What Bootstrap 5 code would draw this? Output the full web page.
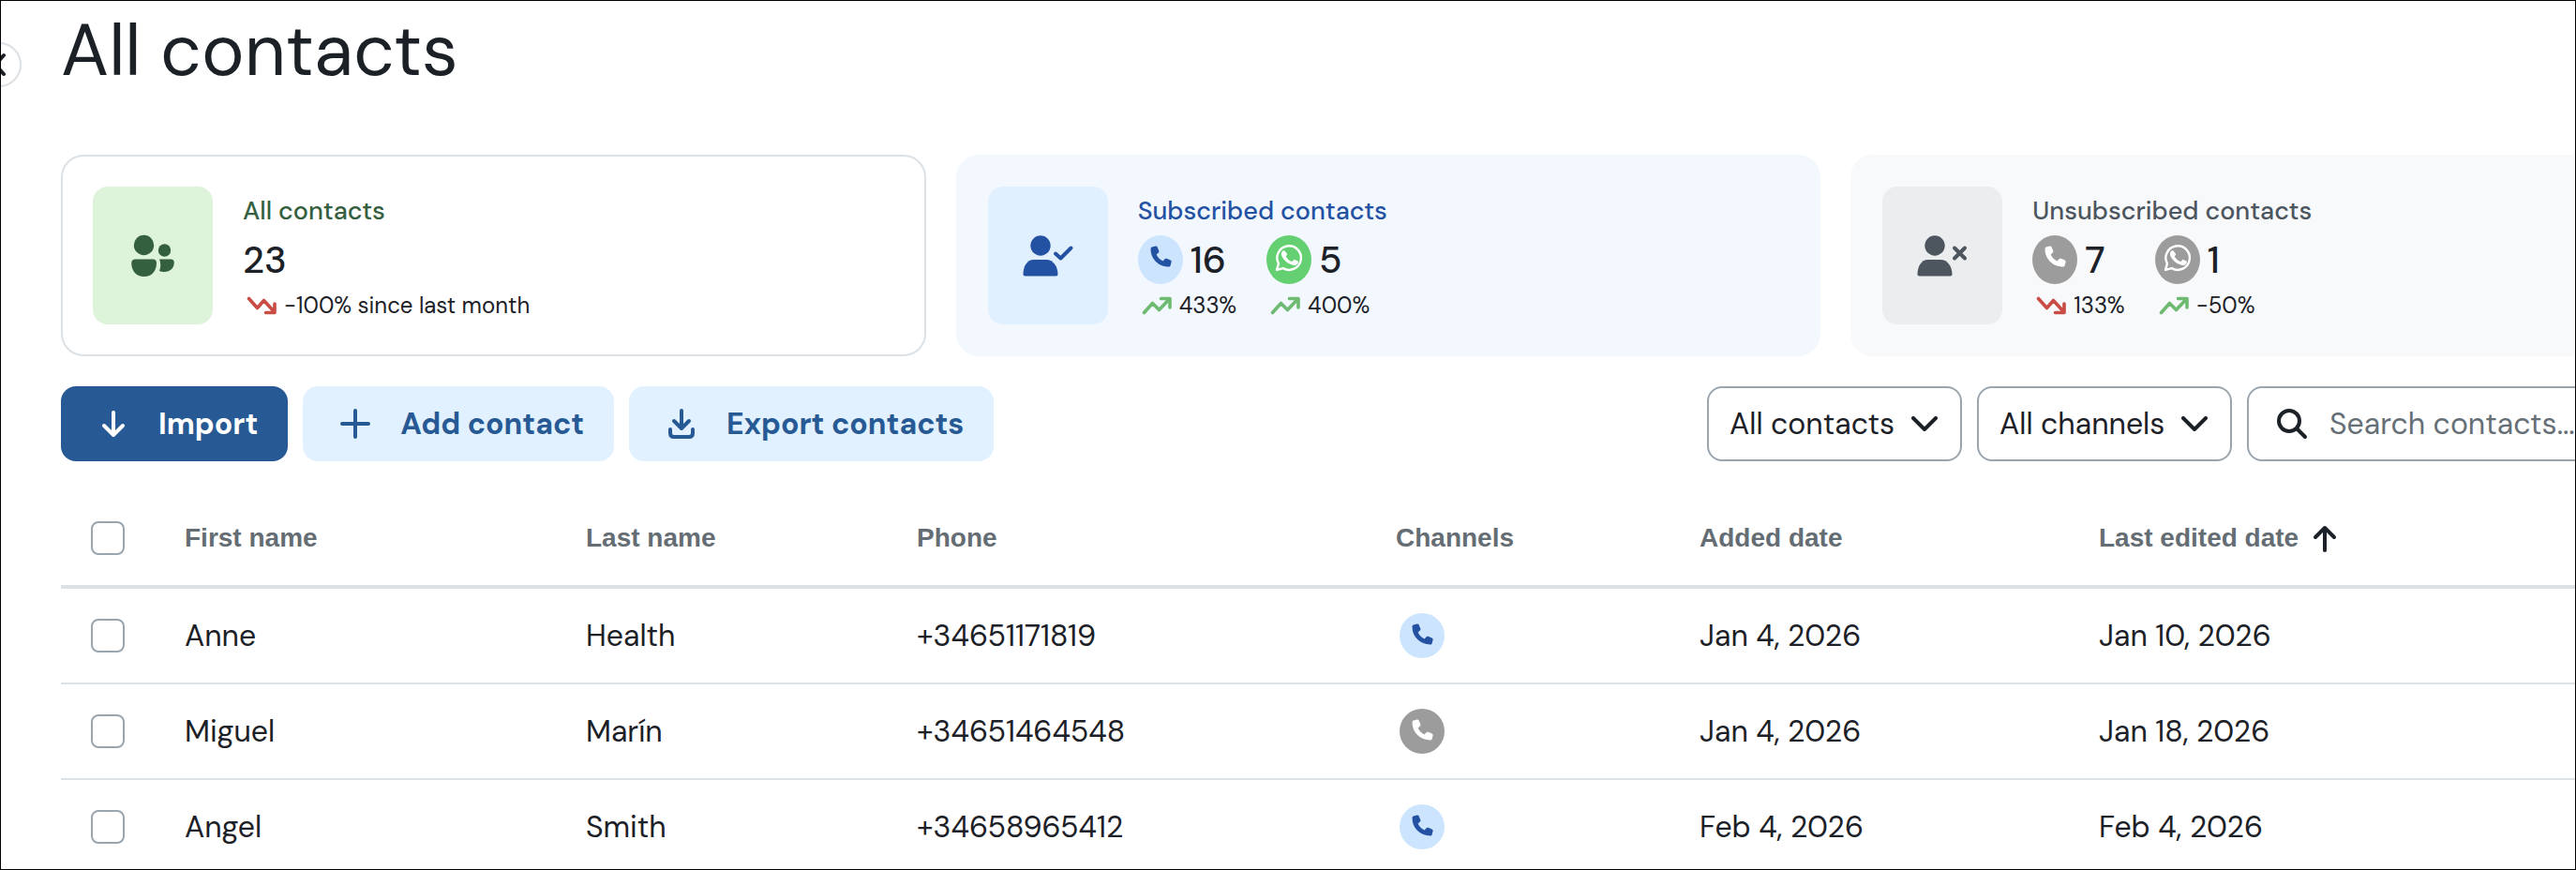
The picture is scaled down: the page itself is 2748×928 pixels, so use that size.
<!DOCTYPE html>
<html lang="en">
<head>
<meta charset="utf-8">
<meta name="viewport" content="width=device-width, initial-scale=1">
<title>All contacts</title>
<link href="https://cdn.jsdelivr.net/npm/bootstrap@5.3.0/dist/css/bootstrap.min.css" rel="stylesheet">
<style>
:root{--ink:#1c2127;--line:#dce1e5;--edge:#9ba5ae;--blue:#275a94;--navy:#2452a3}
body{font-family:"DM Sans",Inter,sans-serif;color:var(--ink);background:#fff;font-size:32px;line-height:40px;min-height:100vh;overflow:hidden}
.frame{border:1px solid #000;height:100vh;overflow:hidden;position:relative}
/* the workspace is wider than the visible pane */
.workspace{padding:3px 0 0 64px;margin-right:-150px}
.collapse-btn{position:absolute;left:-26px;top:44px;width:48px;height:48px;border:2px solid var(--line);border-radius:50%;background:#fff;padding:0}
.collapse-btn svg{display:block;margin:auto}
h1{font-size:77px;line-height:100px;font-weight:400;margin:0 0 61px}
.gap-wide{gap:32px}
.gap-sort{gap:12px}
.toolbar{margin-top:32px}
.stat{flex:1 1 0;border:2px solid transparent;border-radius:24px;padding:32px;gap:32px}
.stat-all{border-color:var(--line)}
.stat-sub{background:#f3f8ff}
.stat-unsub{background:#f8f9fb}
.tile{width:128px;height:147px;border-radius:16px}
.stat-all .tile{background:#ddf3da;color:#35603f}
.stat-sub .tile{background:#e1f0fe;color:var(--navy)}
.stat-unsub .tile{background:#ebedee;color:#4d565e}
.stat-title{font-size:27px;line-height:36px;font-weight:500;margin:8px 0}
.stat-all .stat-title{color:#35603f}
.stat-sub .stat-title{color:var(--navy)}
.stat-unsub .stat-title{color:#4d565e}
.figure-line{font-size:40px;line-height:52px;height:52px;font-weight:500;gap:8px}
.trend{font-size:24px;line-height:32px;margin-top:7px;gap:8px;padding-left:4px}
.dot{width:48px;height:48px;border-radius:50%;display:inline-flex;align-items:center;justify-content:center}
.figure-line .dot{height:52px;padding-bottom:4px}
.dot-blue{background:#cce4fd;color:var(--navy)}
.dot-green{background:#65d072;color:#fff}
.dot-gray{background:#9c9c9c;color:#fff}
.act{height:80px;border:0;border-radius:16px;font-size:32px;font-weight:700;padding:0 32px 0 40px;gap:32px;white-space:nowrap}
.act-main,.act-main:hover{background:var(--blue);color:#fff}
.act-soft,.act-soft:hover{background:#e1f1ff;color:var(--blue)}
.pick{height:80px;width:272px;border:2px solid var(--edge);border-radius:16px;font-size:32px;line-height:40px;color:var(--ink);padding:0 60px 0 22px;background-position:right 24px center;background-size:28px 16px;background-image:url("data:image/svg+xml,%3Csvg xmlns='http://www.w3.org/2000/svg' viewBox='0 0 28 16'%3E%3Cpath d='M2 2l12 12L26 2' fill='none' stroke='%231c2127' stroke-width='4' stroke-linecap='round' stroke-linejoin='round'/%3E%3C/svg%3E")}
.finder{height:80px;width:500px;border:2px solid var(--edge);border-radius:16px;padding-left:29px;gap:23px}
.finder input{border:0;padding:0;font-size:32px;line-height:40px;color:var(--ink);box-shadow:none!important}
.finder input::placeholder{color:#666f76;opacity:1}
.people{table-layout:fixed;width:100%;margin:32px 0 0;border-collapse:separate;border-spacing:0}
.people th,.people td{padding:0;vertical-align:middle;text-align:left}
.people thead th{height:104px;border-bottom:4px solid var(--line);font:700 28px/36px "Liberation Sans",Arial,sans-serif;color:#656d74}
.people tbody td{height:102px;border-bottom:2px solid var(--line)}
.people .dot{display:flex}
.people .form-check-input{display:block;width:36px;height:36px;margin:0 0 0 32px;border:2px solid var(--edge);border-radius:8px}
</style>
</head>
<body>
<div class="frame">
<svg class="d-none" xmlns="http://www.w3.org/2000/svg">
  <symbol id="i-phone" viewBox="0 0 24 24"><path fill="currentColor" d="M3.600 1.400 7 .5c.8-.2 1.600.2 1.900.9l1.500 3.700c.3.700.1 1.400-.4 1.900L8 8.700c1.300 2.900 3.600 5.200 6.500 6.500l1.700-2c.5-.6 1.200-.7 1.900-.4l3.700 1.500c.7.3 1.100 1.100.9 1.900l-.9 3.400c-.2.700-.8 1.200-1.600 1.200C9.800 20.800 1.800 12.500 2.400 3c0-.8.5-1.400 1.200-1.600z"/></symbol>
  <symbol id="i-wa" viewBox="0 0 32 32"><path fill="none" stroke="currentColor" stroke-width="2.600" stroke-linejoin="round" d="M2.200 29.800l2-7.200A13.600 13.600 0 1 1 9.400 27.900z"/><path fill="currentColor" d="M11.300 8.300c-.3-.7-.6-.7-1-.7-1.400 0-3 1.500-3 3.900 0 2.300 1.700 4.500 1.900 4.800.3.300 3.300 5.200 8.100 7 4 1.600 4.800 1.300 5.700 1.200.9-.1 2.800-1.100 3.200-2.300.4-1.100.4-2.100.3-2.300-.1-.2-.5-.3-.9-.5l-3-1.400c-.5-.2-.8-.3-1.100.2l-1.500 1.800c-.3.300-.5.400-1 .1-.5-.2-2-.7-3.700-2.300-1.400-1.200-2.300-2.700-2.600-3.200-.2-.5 0-.7.3-.9.800-.9 1.200-1.500 1.100-2z"/></symbol>
  <symbol id="i-up" viewBox="0 0 32 20"><path fill="none" stroke="currentColor" stroke-width="3.600" stroke-linecap="round" stroke-linejoin="round" d="M2.500 17.500l9-10 7 7L29 3.500M20.500 2.500H30V12"/></symbol>
  <symbol id="i-down" viewBox="0 0 32 20"><path fill="none" stroke="currentColor" stroke-width="3.600" stroke-linecap="round" stroke-linejoin="round" d="M2.500 2.500l9 10 7-8L29 16M20.500 17.500H30V8"/></symbol>
</svg>

<button class="collapse-btn" type="button" aria-label="Collapse sidebar"><svg width="16" height="26" viewBox="0 0 16 26"><path d="M13 3L4 13l9 10" fill="none" stroke="#1c2127" stroke-width="4" stroke-linecap="round" stroke-linejoin="round"/></svg></button>

<main class="workspace">
  <h1>All contacts</h1>

  <section class="d-flex gap-wide">
    <article class="stat stat-all d-flex">
      <div class="tile d-flex align-items-center justify-content-center flex-shrink-0">
        <svg width="48" height="48" viewBox="0 0 48 48" fill="currentColor"><circle cx="14.500" cy="12.500" r="10.700"/><circle cx="36.500" cy="18" r="6.700"/><path d="M5.500 27.500h18.500c2.600 0 4 1.600 4 4C28 40 23 46 14.700 46S1.200 40 1.200 31.500c0-2.400 1.700-4 4.300-4zM31 27.500h12.500c2 0 3.300 1.300 3.300 3.200 0 6-4.300 10.300-10.300 10.300-2 0-4-.2-5.500-1 1.700-4 1.600-8.500 0-12.500z"/></svg>
      </div>
      <div>
        <h2 class="stat-title">All contacts</h2>
        <div class="figure-line d-flex align-items-center">23</div>
        <div class="trend d-flex align-items-center"><svg width="32" height="20" color="#c94c45"><use href="#i-down"/></svg>-100% since last month</div>
      </div>
    </article>
    <article class="stat stat-sub d-flex">
      <div class="tile d-flex align-items-center justify-content-center flex-shrink-0">
        <svg width="56" height="46" viewBox="0 0 56 46" fill="currentColor"><circle cx="20" cy="12" r="10.700"/><path d="M13 27h13c8 0 12.500 8 12.500 15.500 0 1.300-.8 2-2 2h-33c-1.200 0-2-.7-2-2C1.500 35 5 27 13 27z"/><path d="M36 20.500l5.500 5L52.500 14.500" fill="none" stroke="currentColor" stroke-width="4" stroke-linecap="round" stroke-linejoin="round"/></svg>
      </div>
      <div>
        <h2 class="stat-title">Subscribed contacts</h2>
        <div class="d-flex gap-wide">
          <div>
            <div class="figure-line d-flex align-items-center"><span class="dot dot-blue"><svg width="26" height="26"><use href="#i-phone"/></svg></span>16</div>
            <div class="trend d-flex align-items-center"><svg width="32" height="20" color="#6dba70"><use href="#i-up"/></svg>433%</div>
          </div>
          <div>
            <div class="figure-line d-flex align-items-center"><span class="dot dot-green"><svg width="30" height="30"><use href="#i-wa"/></svg></span>5</div>
            <div class="trend d-flex align-items-center"><svg width="32" height="20" color="#6dba70"><use href="#i-up"/></svg>400%</div>
          </div>
        </div>
      </div>
    </article>
    <article class="stat stat-unsub d-flex">
      <div class="tile d-flex align-items-center justify-content-center flex-shrink-0">
        <svg width="56" height="46" viewBox="0 0 56 46" fill="currentColor"><circle cx="20" cy="12" r="10.700"/><path d="M13 27h13c8 0 12.500 8 12.500 15.500 0 1.300-.8 2-2 2h-33c-1.200 0-2-.7-2-2C1.500 35 5 27 13 27z"/><path d="M41 14.500l11 11M52 14.500l-11 11" fill="none" stroke="currentColor" stroke-width="4" stroke-linecap="round"/></svg>
      </div>
      <div>
        <h2 class="stat-title">Unsubscribed contacts</h2>
        <div class="d-flex gap-wide">
          <div>
            <div class="figure-line d-flex align-items-center"><span class="dot dot-gray"><svg width="26" height="26"><use href="#i-phone"/></svg></span>7</div>
            <div class="trend d-flex align-items-center"><svg width="32" height="20" color="#c94c45"><use href="#i-down"/></svg>133%</div>
          </div>
          <div>
            <div class="figure-line d-flex align-items-center"><span class="dot dot-gray"><svg width="30" height="30"><use href="#i-wa"/></svg></span>1</div>
            <div class="trend d-flex align-items-center"><svg width="32" height="20" color="#6dba70"><use href="#i-up"/></svg>-50%</div>
          </div>
        </div>
      </div>
    </article>
  </section>

  <section class="toolbar d-flex gap-3">
    <button type="button" class="act act-main btn d-flex align-items-center"><svg width="32" height="32" viewBox="0 0 32 32" fill="none" stroke="currentColor" stroke-width="4" stroke-linecap="round" stroke-linejoin="round"><path d="M16 4v24M6 18l10 10 10-10"/></svg>Import</button>
    <button type="button" class="act act-soft btn d-flex align-items-center"><svg width="32" height="32" viewBox="0 0 32 32" fill="none" stroke="currentColor" stroke-width="4" stroke-linecap="round"><path d="M16 2v28M2 16h28"/></svg>Add contact</button>
    <button type="button" class="act act-soft btn d-flex align-items-center"><svg width="32" height="32" viewBox="0 0 32 32" fill="none" stroke="currentColor" stroke-width="4" stroke-linecap="round" stroke-linejoin="round"><path d="M16 2v18M8 13l8 8 8-8M4 22v4q0 4 4 4h16q4 0 4-4v-4"/></svg>Export contacts</button>
    <select class="pick form-select ms-auto" aria-label="Contact filter"><option>All contacts</option></select>
    <select class="pick form-select" aria-label="Channel filter"><option>All channels</option></select>
    <label class="finder d-flex align-items-center"><svg class="flex-shrink-0" width="34" height="34" viewBox="0 0 34 34" fill="none" stroke="#1c2127" stroke-width="4" stroke-linecap="round"><circle cx="14" cy="14" r="11"/><path d="M22.500 22.500L31 31"/></svg><input class="form-control" type="text" placeholder="Search contacts..." aria-label="Search contacts"></label>
  </section>

  <table class="people">
    <colgroup><col style="width:132px"><col style="width:428px"><col style="width:353px"><col style="width:511px"><col style="width:324px"><col style="width:426px"><col></colgroup>
    <thead><tr><th scope="col"><input class="form-check-input" type="checkbox" aria-label="Select all"></th><th scope="col">First name</th><th scope="col">Last name</th><th scope="col">Phone</th><th scope="col">Channels</th><th scope="col">Added date</th><th scope="col"><span class="gap-sort d-flex align-items-center">Last edited date<svg width="32" height="32" viewBox="0 0 32 32" fill="none" stroke="#1c2127" stroke-width="4" stroke-linecap="round" stroke-linejoin="round"><path d="M16 29V5M6 15L16 5l10 10"/></svg></span></th></tr></thead>
    <tbody>
      <tr><td><input class="form-check-input" type="checkbox" aria-label="Select Anne Health"></td><td>Anne</td><td>Health</td><td>+34651171819</td><td><span class="dot dot-blue ms-1"><svg width="26" height="26"><use href="#i-phone"/></svg></span></td><td>Jan 4, 2026</td><td>Jan 10, 2026</td></tr>
      <tr><td><input class="form-check-input" type="checkbox" aria-label="Select Miguel Marín"></td><td>Miguel</td><td>Marín</td><td>+34651464548</td><td><span class="dot dot-gray ms-1"><svg width="26" height="26"><use href="#i-phone"/></svg></span></td><td>Jan 4, 2026</td><td>Jan 18, 2026</td></tr>
      <tr><td><input class="form-check-input" type="checkbox" aria-label="Select Angel Smith"></td><td>Angel</td><td>Smith</td><td>+34658965412</td><td><span class="dot dot-blue ms-1"><svg width="26" height="26"><use href="#i-phone"/></svg></span></td><td>Feb 4, 2026</td><td>Feb 4, 2026</td></tr>
    </tbody>
  </table>
</main>
</div>
<script src="https://cdn.jsdelivr.net/npm/bootstrap@5.3.0/dist/js/bootstrap.bundle.min.js"></script>
</body>
</html>
